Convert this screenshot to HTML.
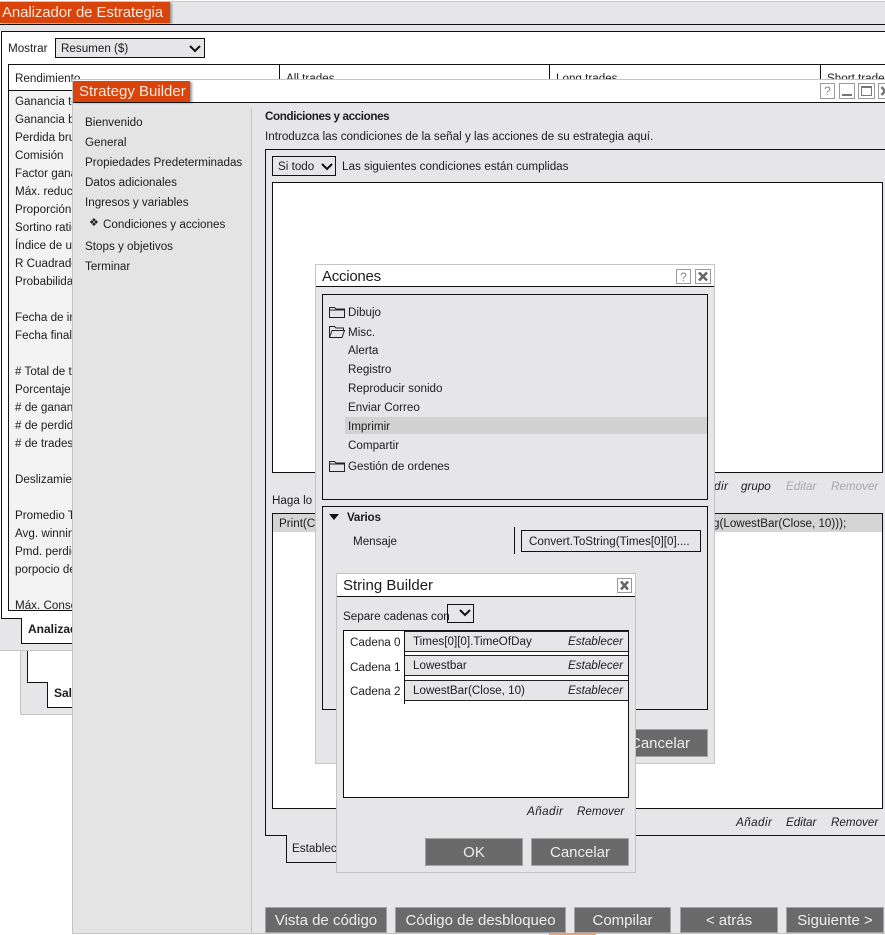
<!DOCTYPE html>
<html><head><meta charset="utf-8">
<style>
html,body{margin:0;padding:0}
body{position:relative;width:885px;height:935px;overflow:hidden;background:#fff;font-family:"Liberation Sans",sans-serif;font-size:11.65px;color:#1c1c1c}
.r{position:absolute;box-sizing:border-box}
.t{position:absolute;white-space:nowrap;line-height:16px;height:16px;margin-top:1px}
.k{border:1px solid #111}
.g{background:#e6e6e8}
.o{background:#d9440a;color:#fbe9df;font-size:15px;line-height:21px;box-shadow:2px 1px 2px #999}
.b{position:absolute;box-sizing:border-box;background:#6a6a6a;border:1px solid #a3a3a3;color:#eee;font-size:15px;text-align:center;line-height:25px;white-space:nowrap;overflow:hidden}
.i{font-style:italic}
.w{position:absolute;box-sizing:border-box;border:1px solid #9a9a9a;background:#fff;color:#888;text-align:center;font-size:12px;line-height:14px}
.a{letter-spacing:.45px}
svg{position:absolute;overflow:visible}
</style></head><body>

<!-- Analyzer window -->
<div class="r g" style="left:0;top:1px;width:885px;height:23px;border-top:1px solid #c8c8c8"></div>
<div class="r o" style="left:0;top:2px;width:170px;height:21px;padding-left:2px;letter-spacing:-.1px">Analizador de Estrategia</div>
<div class="r" style="left:0;top:24px;width:885px;height:1px;background:#111"></div>
<div class="r g" style="left:0;top:25px;width:885px;height:6px"></div>
<div class="r" style="left:1px;top:31px;width:884px;height:588px;background:#fff;border:1px solid #111;border-right:0"></div>
<div class="t" style="left:8px;top:40px">Mostrar</div>
<div class="r k" style="left:55px;top:38px;width:150px;height:20px;background:#e6e6e8"></div>
<div class="t" style="left:61px;top:40px">Resumen ($)</div>
<svg style="left:189px;top:45px" width="12" height="8"><path d="M1 1 L6 6 L11 1" fill="none" stroke="#111" stroke-width="2"/></svg>

<div class="r" style="left:8px;top:64px;width:877px;height:547px;background:#f3f3f3;border:1px solid #111;border-right:0"></div>
<div class="r" style="left:9px;top:65px;width:876px;height:26px;background:#fff;border-bottom:1px solid #111"></div>
<div class="r" style="left:279px;top:65px;width:1px;height:15px;background:#111"></div>
<div class="r" style="left:549px;top:65px;width:1px;height:15px;background:#111"></div>
<div class="r" style="left:820px;top:65px;width:1px;height:15px;background:#111"></div>
<div class="t" style="left:15px;top:70px">Rendimiento</div>
<div class="t" style="left:286px;top:70px">All trades</div>
<div class="t" style="left:556px;top:70px">Long trades</div>
<div class="t" style="left:827px;top:70px">Short trades</div>

<div class="t" style="left:15px;top:93px">Ganancia total</div>
<div class="t" style="left:15px;top:111px">Ganancia bruta</div>
<div class="t" style="left:15px;top:129px">Perdida bruta</div>
<div class="t" style="left:15px;top:147px">Comisión</div>
<div class="t" style="left:15px;top:165px">Factor ganancia</div>
<div class="t" style="left:15px;top:183px">Máx. reducción</div>
<div class="t" style="left:15px;top:201px">Proporción</div>
<div class="t" style="left:15px;top:219px">Sortino ratio</div>
<div class="t" style="left:15px;top:237px">Índice de ulcer</div>
<div class="t" style="left:15px;top:255px">R Cuadrado</div>
<div class="t" style="left:15px;top:273px">Probabilidad</div>
<div class="t" style="left:15px;top:309px">Fecha de inicio</div>
<div class="t" style="left:15px;top:327px">Fecha final</div>
<div class="t" style="left:15px;top:363px"># Total de trades</div>
<div class="t" style="left:15px;top:381px">Porcentaje</div>
<div class="t" style="left:15px;top:399px"># de ganancias</div>
<div class="t" style="left:15px;top:417px"># de perdidas</div>
<div class="t" style="left:15px;top:435px"># de trades</div>
<div class="t" style="left:15px;top:471px">Deslizamiento</div>
<div class="t" style="left:15px;top:507px">Promedio Trade</div>
<div class="t" style="left:15px;top:525px">Avg. winning</div>
<div class="t" style="left:15px;top:543px">Pmd. perdida</div>
<div class="t" style="left:15px;top:561px">porpocio de</div>
<div class="t" style="left:15px;top:597px">Máx. Consec</div>

<!-- tabs bottom-left -->
<div class="r g" style="left:0;top:619px;width:72px;height:32px;border-bottom:1px solid #c4c4c4"></div>
<div class="r" style="left:21px;top:618px;width:60px;height:26px;background:#fff;border:1px solid #111;border-right:0;border-top:0"></div>
<div class="t" style="left:28px;top:621px;font-weight:bold;font-size:12px;margin-top:0">Analizador</div>
<div class="r g" style="left:20px;top:651px;width:60px;height:64px;border:1px solid #c4c4c4;border-top:0"></div>
<div class="r" style="left:27px;top:651px;width:60px;height:32px;background:#fff;border-left:1px solid #111;border-bottom:1px solid #111"></div>
<div class="r" style="left:47px;top:682px;width:40px;height:26px;background:#fff;border-left:1px solid #111;border-bottom:1px solid #111"></div>
<div class="r" style="left:27px;top:682px;width:21px;height:1px;background:#111"></div>
<div class="r" style="left:48px;top:682px;width:40px;height:1px;background:#fff"></div>
<div class="t" style="left:54px;top:685px;font-weight:bold;font-size:12px;margin-top:0">Salida</div>

<!-- Strategy Builder window -->
<div class="r" style="left:72px;top:79px;width:813px;height:855px;background:#e6e6e8;border:1px solid #c4c4c4;border-right:0"></div>
<div class="r" style="left:73px;top:80px;width:812px;height:22px;background:#fff"></div>
<div class="r o" style="left:73px;top:81px;width:117px;height:21px;padding-left:6px">Strategy Builder</div>
<div class="r" style="left:73px;top:102px;width:812px;height:1px;background:#111"></div>
<div class="r" style="left:73px;top:108px;width:179px;height:825px;background:#e4e4e4;border-right:1px solid #c4c4c4"></div>
<div class="w" style="left:820px;top:83px;width:15px;height:16px">?</div>
<div class="w" style="left:839px;top:83px;width:16px;height:16px"></div>
<div class="r" style="left:842px;top:94px;width:10px;height:2px;background:#777"></div>
<div class="w" style="left:858px;top:83px;width:17px;height:16px"></div>
<div class="r" style="left:861px;top:86px;width:11px;height:10px;border:1px solid #777;border-top:2px solid #777"></div>
<div class="w" style="left:878px;top:83px;width:15px;height:16px"></div>
<svg style="left:878px;top:83px" width="15" height="16"><path d="M3.5 4 L10.5 12 M10.5 4 L3.5 12" stroke="#777" stroke-width="2.5"/></svg>

<div class="t" style="left:85px;top:114px">Bienvenido</div>
<div class="t" style="left:85px;top:134px">General</div>
<div class="t" style="left:85px;top:154px">Propiedades Predeterminadas</div>
<div class="t" style="left:85px;top:174px">Datos adicionales</div>
<div class="t" style="left:85px;top:194px">Ingresos y variables</div>
<div class="t" style="left:89px;top:215px;font-size:11px;margin-top:0">❖</div>
<div class="t" style="left:103px;top:216px">Condiciones y acciones</div>
<div class="t" style="left:85px;top:238px">Stops y objetivos</div>
<div class="t" style="left:85px;top:258px">Terminar</div>

<div class="t" style="left:265px;top:108px;font-weight:bold;letter-spacing:-.38px">Condiciones y acciones</div>
<div class="t" style="left:265px;top:128px">Introduzca las condiciones de la señal y las acciones de su estrategia aquí.</div>
<div class="r" style="left:265px;top:149px;width:620px;height:687px;border:1px solid #111;border-right:0"></div>
<div class="r k" style="left:272px;top:156px;width:64px;height:20px"></div>
<div class="t" style="left:278px;top:158px">Si todo</div>
<svg style="left:321px;top:163px" width="12" height="8"><path d="M1 1 L6 6 L11 1" fill="none" stroke="#111" stroke-width="2"/></svg>
<div class="t" style="left:342px;top:158px">Las siguientes condiciones están cumplidas</div>
<div class="r k" style="left:272px;top:182px;width:611px;height:291px;background:#fff"></div>
<div class="t i a" style="left:692px;top:478px">Añadir</div>
<div class="t i" style="left:741px;top:478px">grupo</div>
<div class="t i" style="left:786px;top:478px;color:#a8a8a8">Editar</div>
<div class="t i" style="left:831px;top:478px;color:#a8a8a8">Remover</div>
<div class="t" style="left:272px;top:492px">Haga lo siguiente</div>
<div class="r k" style="left:272px;top:513px;width:611px;height:296px;background:#fff"></div>
<div class="r" style="left:273px;top:514px;width:609px;height:18px;background:#d4d4d4"></div>
<div class="t" style="left:279px;top:515px">Print(Convert</div>
<div class="t" style="left:713px;top:515px">g(LowestBar(Close, 10)));</div>
<div class="t i a" style="left:736px;top:814px">Añadir</div>
<div class="t i" style="left:786px;top:814px">Editar</div>
<div class="t i" style="left:831px;top:814px">Remover</div>
<div class="r" style="left:286px;top:835px;width:60px;height:28px;background:#e6e6e8;border:1px solid #111;border-top:0"></div>
<div class="t" style="left:292px;top:840px">Establecer</div>
<div class="r" style="left:340px;top:862px;width:10px;height:1px;background:#111"></div>

<div class="b" style="left:265px;top:907px;width:122px;height:26px">Vista de código</div>
<div class="b" style="left:395px;top:907px;width:171px;height:26px">Código de desbloqueo</div>
<div class="b" style="left:574px;top:907px;width:97px;height:26px">Compilar</div>
<div class="b" style="left:680px;top:907px;width:98px;height:26px">&lt; atrás</div>
<div class="b" style="left:786px;top:907px;width:98px;height:26px">Siguiente &gt;</div>
<div class="r" style="left:549px;top:933px;width:47px;height:2px;background:#ef9f6c"></div>

<!-- Acciones dialog -->
<div class="r" style="left:315px;top:264px;width:400px;height:500px;background:#e6e6e8;border:1px solid #c4c4c4"></div>
<div class="r" style="left:316px;top:265px;width:398px;height:22px;background:#fff;border-bottom:1px solid #111"></div>
<div class="t" style="left:322px;top:269px;font-size:15px;letter-spacing:-.25px;margin-top:0">Acciones</div>
<div class="w" style="left:676px;top:269px;width:15px;height:15px">?</div>
<div class="w" style="left:695px;top:269px;width:16px;height:15px"></div>
<svg style="left:695px;top:269px" width="16" height="15"><path d="M4 3.5 L12 11.5 M12 3.5 L4 11.5" stroke="#666" stroke-width="2.6"/></svg>

<div class="r k" style="left:322px;top:294px;width:386px;height:206px"></div>
<div class="r" style="left:345px;top:417px;width:362px;height:17px;background:#d2d2d2"></div>
<svg style="left:329px;top:306px" width="16" height="12"><path d="M.5 11.5 V1.5 H5.5 L7 3 H15.5 V11.5 Z M.5 4 H15.5" fill="none" stroke="#222"/></svg>
<svg style="left:329px;top:326px" width="16" height="12"><path d="M.5 11.5 V.5 H5.5 L7 2 H14.5 V4 M.5 11.5 L3 4.5 H15.5 L13 11.5 Z" fill="none" stroke="#222"/></svg>
<svg style="left:329px;top:460px" width="16" height="12"><path d="M.5 11.5 V1.5 H5.5 L7 3 H15.5 V11.5 Z M.5 4 H15.5" fill="none" stroke="#222"/></svg>
<div class="t" style="left:348px;top:304px">Dibujo</div>
<div class="t" style="left:348px;top:324px">Misc.</div>
<div class="t" style="left:348px;top:342px">Alerta</div>
<div class="t" style="left:348px;top:361px">Registro</div>
<div class="t" style="left:348px;top:380px">Reproducir sonido</div>
<div class="t" style="left:348px;top:399px">Enviar Correo</div>
<div class="t" style="left:348px;top:418px">Imprimir</div>
<div class="t" style="left:348px;top:437px">Compartir</div>
<div class="t" style="left:348px;top:458px">Gestión de ordenes</div>

<div class="r k" style="left:322px;top:506px;width:386px;height:204px"></div>
<svg style="left:329px;top:514px" width="11" height="7"><path d="M0 0 H10 L5 6 Z" fill="#111"/></svg>
<div class="t" style="left:347px;top:509px;font-weight:bold;letter-spacing:-.2px">Varios</div>
<div class="t" style="left:353px;top:533px">Mensaje</div>
<div class="r" style="left:514px;top:527px;width:1px;height:27px;background:#111"></div>
<div class="r k" style="left:521px;top:530px;width:180px;height:22px"></div>
<div class="t" style="left:529px;top:533px">Convert.ToString(Times[0][0]....</div>
<div class="b" style="left:612px;top:729px;width:96px;height:28px;line-height:27px">Cancelar</div>

<!-- String Builder dialog -->
<div class="r" style="left:336px;top:573px;width:300px;height:300px;background:#e6e6e8;border:1px solid #c4c4c4"></div>
<div class="r" style="left:337px;top:574px;width:298px;height:23px;background:#fff;border-bottom:1px solid #111"></div>
<div class="t" style="left:343px;top:578px;font-size:15px;margin-top:0">String Builder</div>
<div class="w" style="left:617px;top:578px;width:15px;height:15px"></div>
<svg style="left:617px;top:578px" width="15" height="15"><path d="M4 3.5 L11 11.5 M11 3.5 L4 11.5" stroke="#666" stroke-width="2.6"/></svg>
<div class="t" style="left:343px;top:608px">Separe cadenas con</div>
<div class="r k" style="left:447px;top:604px;width:27px;height:19px"></div>
<svg style="left:459px;top:609px" width="12" height="8"><path d="M1 1 L6 6 L11 1" fill="none" stroke="#111" stroke-width="2"/></svg>

<div class="r k" style="left:343px;top:630px;width:286px;height:168px;background:#fff"></div>
<div class="r" style="left:404px;top:630px;width:1px;height:74px;background:#111"></div>
<div class="r g" style="left:405px;top:631px;width:223px;height:21px;border-top:1px solid #222;border-bottom:1px solid #222"></div>
<div class="r g" style="left:405px;top:655px;width:223px;height:21px;border-top:1px solid #222;border-bottom:1px solid #222"></div>
<div class="r g" style="left:405px;top:680px;width:223px;height:21px;border-top:1px solid #222;border-bottom:1px solid #222"></div>
<div class="t" style="left:350px;top:634px">Cadena 0</div>
<div class="t" style="left:350px;top:659px">Cadena 1</div>
<div class="t" style="left:350px;top:683px">Cadena 2</div>
<div class="t" style="left:413px;top:633px">Times[0][0].TimeOfDay</div>
<div class="t" style="left:413px;top:657px">Lowestbar</div>
<div class="t" style="left:413px;top:682px">LowestBar(Close, 10)</div>
<div class="t i" style="left:568px;top:633px">Establecer</div>
<div class="t i" style="left:568px;top:657px">Establecer</div>
<div class="t i" style="left:568px;top:682px">Establecer</div>
<div class="t i a" style="left:527px;top:803px">Añadir</div>
<div class="t i" style="left:577px;top:803px">Remover</div>
<div class="b" style="left:425px;top:838px;width:98px;height:28px;line-height:27px">OK</div>
<div class="b" style="left:531px;top:838px;width:98px;height:28px;line-height:27px">Cancelar</div>

</body></html>
